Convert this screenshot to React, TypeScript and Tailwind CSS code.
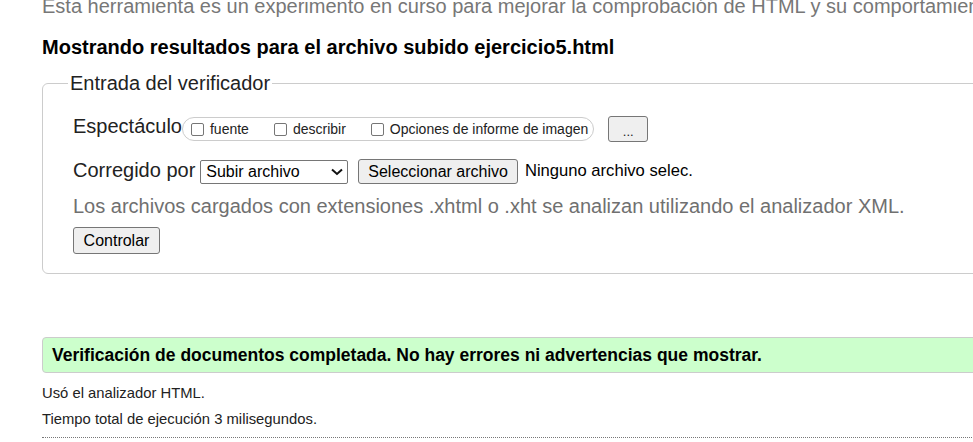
import React from "react";

function Check({ label }: { label: string }) {
  return (
    <label className="flex items-center gap-[6px] text-[14px] leading-[20px] text-[#222]">
      <span className="w-[13px] h-[13px] border border-[#767676] rounded-[2px] bg-white" />
      {label}
    </label>
  );
}

export default function App() {
  return (
    <div className="w-[973px] h-[442px] overflow-hidden bg-white text-[#222] font-['Liberation_Sans',Arial,sans-serif]">
      <div className="w-[1010px] pl-[42px]">
        <p className="mt-[-6px] text-[20px] leading-[24px] text-[#777] whitespace-nowrap">
          Esta herramienta es un experimento en curso para mejorar la comprobación de HTML y su comportamiento.
        </p>
        <h2 className="mt-[17px] text-[20px] leading-[24px] font-bold text-black">
          Mostrando resultados para el archivo subido ejercicio5.html
        </h2>

        <fieldset className="mt-[12px] border border-[#ccc] rounded-[6px] pl-[30px] pb-[19px]">
          <legend className="ml-[-5px] px-[2px] text-[20px] leading-[24px]">Entrada del verificador</legend>

          <div className="mt-[21px] h-[26px] flex items-center">
            <span className="text-[20px] leading-[24px] mb-[6px]">Espectáculo</span>
            <div className="h-[24px] flex items-center gap-[25px] pl-[8px] pr-[5px] border border-[#ccc] rounded-[12px]">
              <Check label="fuente" />
              <Check label="describir" />
              <Check label="Opciones de informe de imagen" />
            </div>
            <button className="ml-[14px] w-[40px] h-[26px] border border-[#767676] rounded-[3px] bg-[#efefef] text-[13px] leading-none pt-[4px]">
              ...
            </button>
          </div>

          <div className="mt-[17px] h-[25px] flex items-center">
            <span className="text-[20px] leading-[24px] mb-[4px]">Corregido por</span>
            <div className="ml-[5px] w-[148px] h-[24px] flex items-center justify-between pl-[5px] pr-[4px] border border-[#767676] rounded-[2px] bg-white text-[16px] text-black">
              <span>Subir archivo</span>
              <svg width="12" height="8" viewBox="0 0 12 8" fill="none" stroke="#111" strokeWidth="2">
                <path d="M1 1.5l5 4.5 5-4.5" />
              </svg>
            </div>
            <button className="ml-[10px] h-[25px] px-[9px] border border-[#767676] rounded-[3px] bg-[#efefef] text-[16px] text-black">
              Seleccionar archivo
            </button>
            <span className="ml-[7px] text-[16.6px] text-black">Ninguno archivo selec.</span>
          </div>

          <p className="mt-[10px] text-[20px] leading-[24px] text-[#707070] whitespace-nowrap">
            Los archivos cargados con extensiones .xhtml o .xht se analizan utilizando el analizador XML.
          </p>

          <button className="mt-[9px] h-[27px] w-[87px] border border-[#767676] rounded-[3px] bg-[#efefef] text-[16px] text-black">
            Controlar
          </button>
        </fieldset>

        <div className="mt-[63px] h-[36px] flex items-center pl-[9px] border border-[#ccc] rounded-[4px] bg-[#ccffcc] text-[17.5px] font-bold text-black">
          Verificación de documentos completada. No hay errores ni advertencias que mostrar.
        </div>

        <p className="mt-[10px] text-[14.8px] leading-[20px]">Usó el analizador HTML.</p>
        <p className="mt-[6px] text-[14.8px] leading-[20px]">Tiempo total de ejecución 3 milisegundos.</p>
        <div className="mt-[8px] border-t border-dotted border-[#777]" />
      </div>
    </div>
  );
}
